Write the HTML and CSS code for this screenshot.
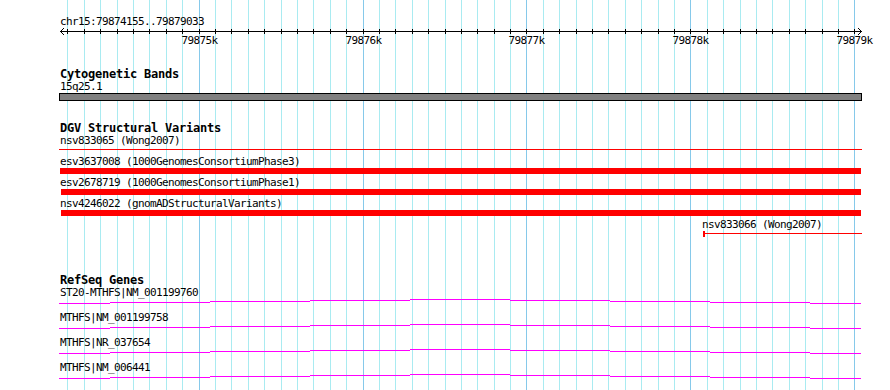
FILE: index.html
```html
<!DOCTYPE html>
<html lang="en">
<head>
<meta charset="utf-8">
<title>chr15:79874155..79879033</title>
<link rel="stylesheet" href="styles.css">
</head>
<body>
<div class="panel">
  <svg class="grid" width="890" height="390" viewBox="0 0 890 390" aria-hidden="true">
    <g class="minor">
      <rect x="67" width="1" height="390"/><rect x="84" width="1" height="390"/><rect x="100" width="1" height="390"/><rect x="117" width="1" height="390"/><rect x="133" width="1" height="390"/><rect x="149" width="1" height="390"/><rect x="166" width="1" height="390"/><rect x="182" width="1" height="390"/>
      <rect x="215" width="1" height="390"/><rect x="231" width="1" height="390"/><rect x="248" width="1" height="390"/><rect x="264" width="1" height="390"/><rect x="281" width="1" height="390"/><rect x="297" width="1" height="390"/><rect x="313" width="1" height="390"/><rect x="330" width="1" height="390"/><rect x="346" width="1" height="390"/>
      <rect x="379" width="1" height="390"/><rect x="395" width="1" height="390"/><rect x="412" width="1" height="390"/><rect x="428" width="1" height="390"/><rect x="445" width="1" height="390"/><rect x="461" width="1" height="390"/><rect x="477" width="1" height="390"/><rect x="494" width="1" height="390"/><rect x="510" width="1" height="390"/>
      <rect x="543" width="1" height="390"/><rect x="559" width="1" height="390"/><rect x="576" width="1" height="390"/><rect x="592" width="1" height="390"/><rect x="608" width="1" height="390"/><rect x="625" width="1" height="390"/><rect x="641" width="1" height="390"/><rect x="658" width="1" height="390"/><rect x="674" width="1" height="390"/>
      <rect x="707" width="1" height="390"/><rect x="723" width="1" height="390"/><rect x="740" width="1" height="390"/><rect x="756" width="1" height="390"/><rect x="772" width="1" height="390"/><rect x="789" width="1" height="390"/><rect x="805" width="1" height="390"/><rect x="822" width="1" height="390"/><rect x="838" width="1" height="390"/>
    </g>
    <g class="major">
      <rect x="199" width="1" height="390"/><rect x="363" width="1" height="390"/><rect x="526" width="1" height="390"/><rect x="690" width="1" height="390"/><rect x="854" width="1" height="390"/>
    </g>
  </svg>

  <div class="content">
    <div class="ruler">
      <div class="seq-label">chr15:79874155..79879033</div>
      <svg class="axis" width="890" height="6" viewBox="0 0 890 6" aria-hidden="true">
        <rect x="60" y="3" width="802" height="1"/>
        <rect x="61" y="2" width="1" height="1"/><rect x="62" y="1" width="1" height="1"/><rect x="63" y="0" width="1" height="1"/>
        <rect x="61" y="4" width="1" height="1"/><rect x="62" y="5" width="1" height="1"/><rect x="63" y="6" width="1" height="1"/>
        <rect x="860" y="2" width="1" height="1"/><rect x="859" y="1" width="1" height="1"/><rect x="858" y="0" width="1" height="1"/>
        <rect x="860" y="4" width="1" height="1"/><rect x="859" y="5" width="1" height="1"/><rect x="858" y="6" width="1" height="1"/>
        <g class="ticks">
          <rect x="67" y="1" width="1" height="5"/><rect x="84" y="1" width="1" height="5"/><rect x="100" y="1" width="1" height="5"/><rect x="117" y="1" width="1" height="5"/><rect x="133" y="1" width="1" height="5"/><rect x="149" y="1" width="1" height="5"/><rect x="166" y="1" width="1" height="5"/><rect x="182" y="1" width="1" height="5"/><rect x="199" y="1" width="1" height="5"/>
          <rect x="215" y="1" width="1" height="5"/><rect x="231" y="1" width="1" height="5"/><rect x="248" y="1" width="1" height="5"/><rect x="264" y="1" width="1" height="5"/><rect x="281" y="1" width="1" height="5"/><rect x="297" y="1" width="1" height="5"/><rect x="313" y="1" width="1" height="5"/><rect x="330" y="1" width="1" height="5"/><rect x="346" y="1" width="1" height="5"/><rect x="363" y="1" width="1" height="5"/>
          <rect x="379" y="1" width="1" height="5"/><rect x="395" y="1" width="1" height="5"/><rect x="412" y="1" width="1" height="5"/><rect x="428" y="1" width="1" height="5"/><rect x="445" y="1" width="1" height="5"/><rect x="461" y="1" width="1" height="5"/><rect x="477" y="1" width="1" height="5"/><rect x="494" y="1" width="1" height="5"/><rect x="510" y="1" width="1" height="5"/><rect x="526" y="1" width="1" height="5"/>
          <rect x="543" y="1" width="1" height="5"/><rect x="559" y="1" width="1" height="5"/><rect x="576" y="1" width="1" height="5"/><rect x="592" y="1" width="1" height="5"/><rect x="608" y="1" width="1" height="5"/><rect x="625" y="1" width="1" height="5"/><rect x="641" y="1" width="1" height="5"/><rect x="658" y="1" width="1" height="5"/><rect x="674" y="1" width="1" height="5"/><rect x="690" y="1" width="1" height="5"/>
          <rect x="707" y="1" width="1" height="5"/><rect x="723" y="1" width="1" height="5"/><rect x="740" y="1" width="1" height="5"/><rect x="756" y="1" width="1" height="5"/><rect x="772" y="1" width="1" height="5"/><rect x="789" y="1" width="1" height="5"/><rect x="805" y="1" width="1" height="5"/><rect x="822" y="1" width="1" height="5"/><rect x="838" y="1" width="1" height="5"/><rect x="854" y="1" width="1" height="5"/>
        </g>
      </svg>
      <div class="tick-labels">
        <span class="tick-label" style="left:199.5px">79875k</span>
        <span class="tick-label" style="left:363.5px">79876k</span>
        <span class="tick-label" style="left:526.5px">79877k</span>
        <span class="tick-label" style="left:690.5px">79878k</span>
        <span class="tick-label" style="left:854.5px">79879k</span>
      </div>
    </div>

    <section class="track">
      <h2 class="track-title">Cytogenetic Bands</h2>
      <div class="feat-label" style="margin-left:60px">15q25.1</div>
      <div class="band" style="margin-left:59px;width:803px"></div>
    </section>

    <section class="track track-sv">
      <h2 class="track-title">DGV Structural Variants</h2>
      <div class="sv-row">
        <div class="feat-label" style="margin-left:60px">nsv833065 (Wong2007)</div>
        <div class="sv-glyph thin" style="margin-left:59px;width:803px"></div>
      </div>
      <div class="sv-row">
        <div class="feat-label" style="margin-left:60px">esv3637008 (1000GenomesConsortiumPhase3)</div>
        <div class="sv-glyph thick" style="margin-left:60px;width:801px"></div>
      </div>
      <div class="sv-row">
        <div class="feat-label" style="margin-left:60px">esv2678719 (1000GenomesConsortiumPhase1)</div>
        <div class="sv-glyph thick" style="margin-left:61px;width:800px"></div>
      </div>
      <div class="sv-row">
        <div class="feat-label" style="margin-left:60px">nsv4246022 (gnomADStructuralVariants)</div>
        <div class="sv-glyph thick" style="margin-left:61px;width:800px"></div>
      </div>
      <div class="sv-row">
        <div class="feat-label" style="margin-left:702px">nsv833066 (Wong2007)</div>
        <div class="sv-glyph thin" style="margin-left:703px;width:159px"><div class="sv-cap"></div></div>
      </div>
    </section>

    <section class="track track-genes">
      <h2 class="track-title">RefSeq Genes</h2>
      <svg class="defs" width="0" height="0" aria-hidden="true">
        <defs>
          <g id="hat">
            <rect x="0" y="4" width="51" height="1"/>
            <rect x="51" y="3" width="100" height="1"/>
            <rect x="151" y="2" width="100" height="1"/>
            <rect x="251" y="1" width="100" height="1"/>
            <rect x="351" y="0" width="100" height="1"/>
            <rect x="451" y="1" width="100" height="1"/>
            <rect x="551" y="2" width="100" height="1"/>
            <rect x="651" y="3" width="100" height="1"/>
            <rect x="751" y="4" width="51" height="1"/>
          </g>
        </defs>
      </svg>
      <div class="gene-row">
        <div class="feat-label" style="margin-left:60px">ST20-MTHFS|NM_001199760</div>
        <svg class="gene-glyph" style="margin-left:59px" width="802" height="5" viewBox="0 0 802 5"><use href="#hat"/></svg>
      </div>
      <div class="gene-row">
        <div class="feat-label" style="margin-left:60px">MTHFS|NM_001199758</div>
        <svg class="gene-glyph" style="margin-left:59px" width="802" height="5" viewBox="0 0 802 5"><use href="#hat"/></svg>
      </div>
      <div class="gene-row">
        <div class="feat-label" style="margin-left:60px">MTHFS|NR_037654</div>
        <svg class="gene-glyph" style="margin-left:59px" width="802" height="5" viewBox="0 0 802 5"><use href="#hat"/></svg>
      </div>
      <div class="gene-row">
        <div class="feat-label" style="margin-left:60px">MTHFS|NM_006441</div>
        <svg class="gene-glyph" style="margin-left:59px" width="802" height="5" viewBox="0 0 802 5"><use href="#hat"/></svg>
      </div>
    </section>
  </div>
</div>
</body>
</html>
```

FILE: styles.css
```css
* {
  box-sizing: border-box;
}

html, body {
  margin: 0;
  padding: 0;
  background: #ffffff;
}

.panel {
  position: relative;
  width: 890px;
  height: 390px;
  overflow: hidden;
  padding-top: 15px;
  font-family: "DejaVu Sans Mono", "Liberation Mono", monospace;
  color: #000000;
  background: #ffffff;
}

.grid {
  position: absolute;
  left: 0;
  top: 0;
  display: block;
}

.grid .minor {
  fill: #a9ebf1;
}

.grid .major {
  fill: #86c9ea;
}

.content {
  position: relative;
}

.seq-label {
  padding-left: 60px;
  height: 13px;
  font-size: 11px;
  line-height: 13px;
  letter-spacing: -0.62px;
  white-space: nowrap;
}

.axis {
  display: block;
  overflow: visible;
  fill: #000000;
}

.tick-labels {
  position: relative;
  height: 13px;
  font-size: 11px;
  line-height: 13px;
  letter-spacing: -0.62px;
}

.tick-label {
  position: absolute;
  top: 0;
  transform: translateX(-50%);
  white-space: nowrap;
}

.track {
  margin-top: 20px;
}

.track-sv {
  padding-bottom: 3px;
}

.track-genes {
  margin-top: 33px;
}

.track-title {
  margin: 0;
  padding-left: 60px;
  height: 14px;
  font-size: 12px;
  font-weight: bold;
  line-height: 14px;
  letter-spacing: -0.22px;
  white-space: nowrap;
}

.feat-label {
  height: 12px;
  font-size: 11px;
  line-height: 12px;
  letter-spacing: -0.62px;
  white-space: nowrap;
}

.band {
  height: 8px;
  border: 1px solid #000000;
  background: #808080;
}

.sv-row {
  margin-top: 3px;
}

.track-title + .sv-row {
  margin-top: 0;
}

.sv-glyph {
  height: 6px;
}

.sv-glyph.thick {
  background: #ff0000;
}

.sv-glyph.thin {
  background: linear-gradient(#ff0000, #ff0000) 0 2px / 100% 1px no-repeat;
}

.sv-cap {
  width: 2px;
  height: 6px;
  background: #ff0000;
}

.defs {
  position: absolute;
  width: 0;
  height: 0;
}

.gene-row {
  margin-bottom: 8px;
}

.gene-glyph {
  display: block;
  fill: #ff00ff;
}
```
